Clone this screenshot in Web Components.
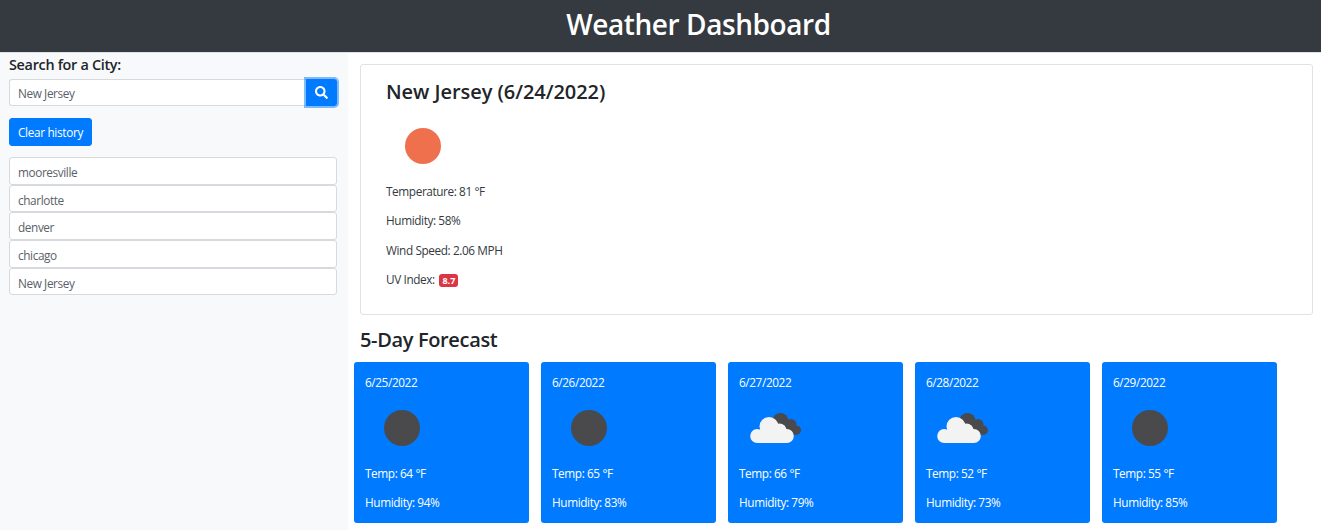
<!DOCTYPE html>
<html>
<head>
<meta charset="utf-8">
<title>Weather Dashboard</title>
<style>
    html, body { margin: 0; height: 100%; }
    body {
        width: 1321px;
        height: 530px;
        overflow: hidden;
        background: #fff;
        color: #212529;
        font-family: "Open Sans", "Noto Sans", sans-serif;
        font-size: 12px;
    }
</style>
</head>
<body>
<weather-dashboard></weather-dashboard>

<script>
const ICONS = {
    sun: color => `<svg width="36" height="36" viewBox="0 0 36 36"><circle cx="18" cy="18" r="18" fill="${color}"/></svg>`,
    clouds: () => `<svg width="54" height="36" viewBox="0 0 54 36">
        <g fill="#4a4a4c"><circle cx="30.500" cy="11" r="8"/><circle cx="41" cy="14.500" r="5.500"/><circle cx="46.300" cy="20.300" r="4.700"/><rect x="30" y="12" width="14" height="13"/></g>
        <g fill="#f3f3f3"><circle cx="7.200" cy="26" r="7"/><circle cx="19" cy="16.500" r="9.500"/><circle cx="29.500" cy="20.500" r="7"/><circle cx="36.800" cy="26" r="7"/><rect x="7" y="20" width="30" height="13"/></g>
    </svg>`
};

class AppHeader extends HTMLElement {
    constructor() {
        super();
        this.attachShadow({ mode: 'open' }).innerHTML = `
            <style>
                :host { display: block; background: #343a40; border-bottom: 1px solid #dee2e6; }
                h1 { margin: 0; height: 52px; line-height: 48px; padding-left: 76px; text-align: center; color: #fff; font-size: 28px; font-weight: 600; letter-spacing: -.42px; }
            </style>
            <h1><slot></slot></h1>`;
    }
}
customElements.define('app-header', AppHeader);

class CitySearch extends HTMLElement {
    constructor() {
        super();
        this.attachShadow({ mode: 'open' }).innerHTML = `
            <style>
                :host { display: block; }
                label { display: block; font-size: 14.400px; font-weight: 600; line-height: 20px; height: 24px; letter-spacing: -.3px; }
                .group { display: flex; }
                input {
                    flex: 1; min-width: 0; box-sizing: border-box; height: 27px; padding: 0 8px; margin: 0;
                    font: inherit; font-size: 11.800px; letter-spacing: -.4px; color: #5a6168; background: #fff;
                    border: 1px solid #d6dade; border-right: 0; border-radius: 3px 0 0 3px; outline: 0;
                }
                button {
                    width: 31px; height: 27px; padding: 0; border: 1px solid #007bff; border-radius: 0 3px 3px 0;
                    background: #007bff; display: flex; align-items: center; justify-content: center;
                    box-shadow: 0 0 0 2px rgba(0,123,255,.5);
                }
                svg { display: block; }
            </style>
            <label for="q">Search for a City:</label>
            <div class="group">
                <input id="q" type="text" value="New Jersey">
                <button aria-label="Search">
                    <svg width="13" height="13" viewBox="0 0 512 512"><path fill="#fff" d="M505 442.700L405.300 343c-4.500-4.500-10.600-7-17-7H372c27.600-35.300 44-79.700 44-128C416 93.100 322.900 0 208 0S0 93.100 0 208s93.100 208 208 208c48.300 0 92.700-16.400 128-44v16.300c0 6.400 2.500 12.500 7 17l99.700 99.700c9.400 9.400 24.600 9.400 33.900 0l28.300-28.300c9.400-9.400 9.400-24.600.1-34zM208 336c-70.700 0-128-57.200-128-128 0-70.700 57.200-128 128-128 70.700 0 128 57.200 128 128 0 70.700-57.200 128-128 128z"/></svg>
                </button>
            </div>`;
    }
}
customElements.define('city-search', CitySearch);

class HistoryList extends HTMLElement {
    constructor() {
        super();
        const cities = (this.getAttribute('cities') || '').split(',');
        this.attachShadow({ mode: 'open' }).innerHTML = `
            <style>
                :host { display: block; }
                button.clear {
                    display: block; height: 28px; width: 83px; padding: 0; margin: 12px 0 11px; border: 1px solid #007bff;
                    border-radius: 3px; background: #007bff; color: #fff; font: inherit; font-size: 11.800px; letter-spacing: -.32px;
                }
                ul { list-style: none; margin: 0; padding: 0; }
                li {
                    box-sizing: border-box; height: 27.700px; line-height: 28.500px; padding: 0 8px; color: #5a6168; background: #fff;
                    font-size: 11.800px; letter-spacing: -.4px; border: 1px solid #d6dade; border-radius: 3px;
                }
            </style>
            <button class="clear">Clear history</button>
            <ul>${cities.map(c => `<li>${c}</li>`).join('')}</ul>`;
    }
}
customElements.define('history-list', HistoryList);

class CurrentWeather extends HTMLElement {
    constructor() {
        super();
        this.attachShadow({ mode: 'open' }).innerHTML = `
            <style>
                :host { display: block; box-sizing: border-box; height: 251px; padding: 12px 25px 0 26px; background: #fff; border: 1px solid #e2e2e2; border-radius: 3px; }
                h2 { margin: 0 0 9px -1px; font-size: 20px; font-weight: 600; line-height: 30px; letter-spacing: -.05px; color: #212529; }
                .icon { box-sizing: border-box; height: 66px; padding: 12px 0 0 18px; }
                p { margin: 0 0 11.300px -1px; height: 18px; line-height: 18px; font-size: 11.800px; letter-spacing: -.4px; color: #343a40; }
                .badge { display: inline-block; margin-left: 2px; background: #dc3545; color: #fff; font-size: 9px; font-weight: 700; line-height: 13px; padding: 0 3px; border-radius: 3px; letter-spacing: 0; vertical-align: 0; }
                svg { display: block; }
            </style>
            <h2>New Jersey (6/24/2022)</h2>
            <div class="icon">${ICONS.sun('#ef704d')}</div>
            <p>Temperature: 81 °F</p>
            <p>Humidity: 58%</p>
            <p>Wind Speed: 2.06 MPH</p>
            <p>UV Index: <span class="badge">8.7</span></p>`;
    }
}
customElements.define('current-weather', CurrentWeather);

class ForecastCard extends HTMLElement {
    constructor() {
        super();
        const icon = this.getAttribute('icon');
        this.attachShadow({ mode: 'open' }).innerHTML = `
            <style>
                :host { display: block; box-sizing: border-box; width: 175px; height: 161px; padding: 11px 11px; background: #007bff; color: #fff; border-radius: 3px; font-size: 11.800px; letter-spacing: -.4px; }
                .date { height: 18px; line-height: 18px; }
                .icon { height: 73px; box-sizing: border-box; padding: 19px 0 0 ${icon === 'clouds' ? 11 : 19}px; }
                p { margin: 0 0 11px; height: 18px; line-height: 18px; }
                svg { display: block; }
            </style>
            <div class="date">${this.getAttribute('date')}</div>
            <div class="icon">${icon === 'clouds' ? ICONS.clouds() : ICONS.sun('#4a4a4c')}</div>
            <p>Temp: ${this.getAttribute('temp')} °F</p>
            <p>Humidity: ${this.getAttribute('humidity')}%</p>`;
    }
}
customElements.define('forecast-card', ForecastCard);

class WeatherDashboard extends HTMLElement {
    constructor() {
        super();
        this.attachShadow({ mode: 'open' }).innerHTML = `
            <style>
                :host { display: block; height: 530px; }
                .body { display: flex; height: 477px; }
                aside { box-sizing: border-box; width: 348px; padding: 2px 11px 0 9px; background: #f8f9fa; }
                main { flex: 1; padding: 11px 8px 0 6px; }
                current-weather { margin-left: 6px; }
                h3 { margin: 9px 0 7px 6px; font-size: 20px; font-weight: 600; line-height: 31px; letter-spacing: -.35px; }
                .cards { display: flex; gap: 12px; }
            </style>
            <app-header>Weather Dashboard</app-header>
            <div class="body">
                <aside>
                    <city-search></city-search>
                    <history-list cities="mooresville,charlotte,denver,chicago,New Jersey"></history-list>
                </aside>
                <main>
                    <current-weather></current-weather>
                    <h3>5-Day Forecast</h3>
                    <div class="cards">
                        <forecast-card date="6/25/2022" icon="sun" temp="64" humidity="94"></forecast-card>
                        <forecast-card date="6/26/2022" icon="sun" temp="65" humidity="83"></forecast-card>
                        <forecast-card date="6/27/2022" icon="clouds" temp="66" humidity="79"></forecast-card>
                        <forecast-card date="6/28/2022" icon="clouds" temp="52" humidity="73"></forecast-card>
                        <forecast-card date="6/29/2022" icon="sun" temp="55" humidity="85"></forecast-card>
                    </div>
                </main>
            </div>`;
    }
}
customElements.define('weather-dashboard', WeatherDashboard);
</script>
</body>
</html>
